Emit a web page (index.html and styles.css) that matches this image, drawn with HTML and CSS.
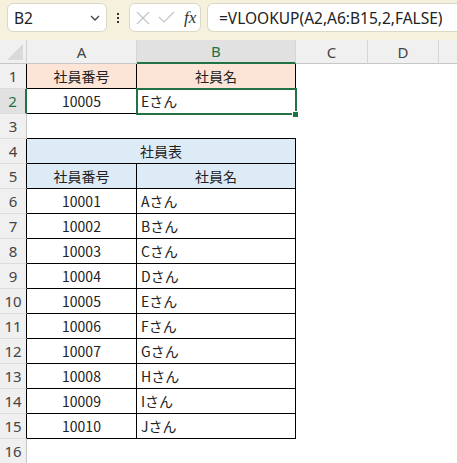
FILE: index.html
```html
<!DOCTYPE html>
<html lang="ja">
<head>
  <meta charset="UTF-8" />
  <title>VLOOKUP</title>
  <link rel="stylesheet" href="styles.css">
</head>
<body>

<div class="fbar">
  <div class="namebox">
    <span>B2</span>
    <svg class="chev" width="10" height="6" viewBox="0 0 10 6"><polyline points="1,1 5,5 9,1" fill="none" stroke="#444" stroke-width="1.3"/></svg>
  </div>
  <div class="dots"><i></i><i></i><i></i></div>
  <div class="fxbox">
    <svg width="14" height="14" viewBox="0 0 14 14"><path d="M1 1 L13 13 M13 1 L1 13" stroke="#c4c4c4" stroke-width="1.2"/></svg>
    <svg width="17" height="13" viewBox="0 0 17 13"><polyline points="1,6 6,11 16,1" fill="none" stroke="#c4c4c4" stroke-width="1.2"/></svg>
    <span class="fx">fx</span>
  </div>
  <div class="formula">=VLOOKUP(A2,A6:B15,2,FALSE)</div>
</div>

<div class="sheet">
  <div class="corner"><b></b></div>
  <div class="ch">A</div>
  <div class="ch on">B</div>
  <div class="ch">C</div>
  <div class="ch">D</div>
  <div class="ch last"></div>

  <div class="rh in">1</div><div class="c tb mid hd1">社員番号</div><div class="c tb mid hd1">社員名</div><div class="c"></div><div class="c"></div><div class="c"></div>
  <div class="rh on">2</div><div class="c tb mid">10005</div><div class="c tb">Eさん</div><div class="c"></div><div class="c"></div><div class="c"></div>
  <div class="rh">3</div><div class="c under"></div><div class="c under"></div><div class="c"></div><div class="c"></div><div class="c"></div>
  <div class="rh in">4</div><div class="c tb mid hd2 span2">社員表</div><div class="c"></div><div class="c"></div><div class="c"></div>
  <div class="rh in">5</div><div class="c tb mid hd2">社員番号</div><div class="c tb mid hd2">社員名</div><div class="c"></div><div class="c"></div><div class="c"></div>
  <div class="rh in">6</div><div class="c tb mid">10001</div><div class="c tb">Aさん</div><div class="c"></div><div class="c"></div><div class="c"></div>
  <div class="rh in">7</div><div class="c tb mid">10002</div><div class="c tb">Bさん</div><div class="c"></div><div class="c"></div><div class="c"></div>
  <div class="rh in">8</div><div class="c tb mid">10003</div><div class="c tb">Cさん</div><div class="c"></div><div class="c"></div><div class="c"></div>
  <div class="rh in">9</div><div class="c tb mid">10004</div><div class="c tb">Dさん</div><div class="c"></div><div class="c"></div><div class="c"></div>
  <div class="rh in">10</div><div class="c tb mid">10005</div><div class="c tb">Eさん</div><div class="c"></div><div class="c"></div><div class="c"></div>
  <div class="rh in">11</div><div class="c tb mid">10006</div><div class="c tb">Fさん</div><div class="c"></div><div class="c"></div><div class="c"></div>
  <div class="rh in">12</div><div class="c tb mid">10007</div><div class="c tb">Gさん</div><div class="c"></div><div class="c"></div><div class="c"></div>
  <div class="rh in">13</div><div class="c tb mid">10008</div><div class="c tb">Hさん</div><div class="c"></div><div class="c"></div><div class="c"></div>
  <div class="rh in">14</div><div class="c tb mid">10009</div><div class="c tb">Iさん</div><div class="c"></div><div class="c"></div><div class="c"></div>
  <div class="rh in">15</div><div class="c tb mid">10010</div><div class="c tb">Jさん</div><div class="c"></div><div class="c"></div><div class="c"></div>
  <div class="rh">16</div><div class="c"></div><div class="c"></div><div class="c"></div><div class="c"></div><div class="c"></div>

  <div class="sel"></div>
  <div class="handle"></div>
</div>

</body>
</html>
```

FILE: styles.css
```css
html, body {
    margin: 0;
    padding: 0;
    background: #fff;
    overflow: hidden;
    font-family: 'Noto Sans CJK JP', 'Noto Sans', sans-serif;
    color: #222;
}

/* formula bar */
.fbar {
    height: 40px;
    background: #f5f1dc;
    display: flex;
    align-items: flex-start;
    padding: 3px 0 0 7px;
    box-sizing: border-box;
    white-space: nowrap;
    overflow: hidden;
}
.fbar > * { flex-shrink: 0; }
.namebox {
    width: 100px;
    height: 29px;
    box-sizing: border-box;
    background: #fff;
    border: 1px solid #dcd8c6;
    border-radius: 6px;
    display: flex;
    align-items: center;
    justify-content: space-between;
    padding: 0 6px 0 6px;
    font-family: 'Noto Sans', sans-serif;
    font-size: 15.5px;
    color: #222;
}
.chev { margin-top: 1px; }
.dots {
    width: 22px;
    height: 29px;
    display: flex;
    flex-direction: column;
    align-items: center;
    justify-content: center;
    gap: 2px;
}
.dots i {
    display: block;
    width: 2px;
    height: 2px;
    background: #333;
}
.fxbox {
    width: 72px;
    height: 29px;
    box-sizing: border-box;
    background: #fff;
    border: 1px solid #dcd8c6;
    border-radius: 6px;
    display: flex;
    align-items: center;
    gap: 8px;
    padding: 0 0 0 6px;
}
.fx {
    font-family: 'Liberation Serif', serif;
    font-style: italic;
    font-size: 17px;
    color: #333;
    margin-left: 1px;
}
.formula {
    margin-left: 6px;
    width: 300px;
    height: 29px;
    box-sizing: border-box;
    background: #fff;
    border: 1px solid #dcd8c6;
    border-radius: 6px 0 0 6px;
    border-right: none;
    display: flex;
    align-items: center;
    padding-left: 11px;
    font-family: 'Noto Sans', sans-serif;
    font-size: 15.5px;
    color: #222;
}

/* sheet grid */
.sheet {
    position: relative;
    display: grid;
    grid-template-columns: 27px 110px 159px 72px 71px 18px;
    grid-template-rows: 24px repeat(16, 25px);
}
.sheet > div { box-sizing: border-box; }

.corner {
    background: #f0f0f0;
    border-right: 1px solid #d0d0d0;
    border-bottom: 1px solid #c6c6c6;
    position: relative;
}
.corner b {
    position: absolute;
    right: 3px;
    bottom: 3px;
    width: 16px;
    height: 16px;
    background: #dadada;
    clip-path: polygon(100% 0, 100% 100%, 0 100%);
}
.ch {
    background: #f0f0f0;
    border-right: 1px solid #d6d6d6;
    border-bottom: 1px solid #c6c6c6;
    display: flex;
    align-items: center;
    justify-content: center;
    font-family: 'Noto Sans', sans-serif;
    font-size: 15px;
    color: #444;
}
.ch.on {
    background: #e1e1e1;
    color: #1e7145;
    border-bottom: 2px solid #217346;
}
.ch.last { border-right: none; }

.rh {
    background: #f0f0f0;
    border-right: 1px solid #c6c6c6;
    border-bottom: 1px solid #dcdcdc;
    display: flex;
    align-items: center;
    justify-content: center;
    font-family: 'Noto Sans', sans-serif;
    font-size: 15px;
    color: #444;
}
.rh.in { border-right-color: #000; }
.rh.on {
    background: #e1e1e1;
    color: #1e7145;
    border-right: 2px solid #217346;
}

.c {
    display: flex;
    align-items: center;
    padding: 0 4px;
    font-size: 14px;
    white-space: nowrap;
    overflow: hidden;
}
.tb {
    border-right: 1px solid #000;
    border-bottom: 1px solid #000;
}
.under { border-bottom: 1px solid #000; }
.mid { justify-content: center; }
.hd1 { background: #fce4d6; }
.hd2 { background: #ddebf7; }
.span2 { grid-column: span 2; }

/* active cell B2 */
.sel {
    position: absolute;
    left: 136px;
    top: 48px;
    width: 161px;
    height: 27px;
    border: 2px solid #217346;
    box-sizing: border-box;
}
.handle {
    position: absolute;
    left: 292px;
    top: 71px;
    width: 7px;
    height: 7px;
    background: #217346;
    border: 1px solid #fff;
    box-sizing: border-box;
}
```
